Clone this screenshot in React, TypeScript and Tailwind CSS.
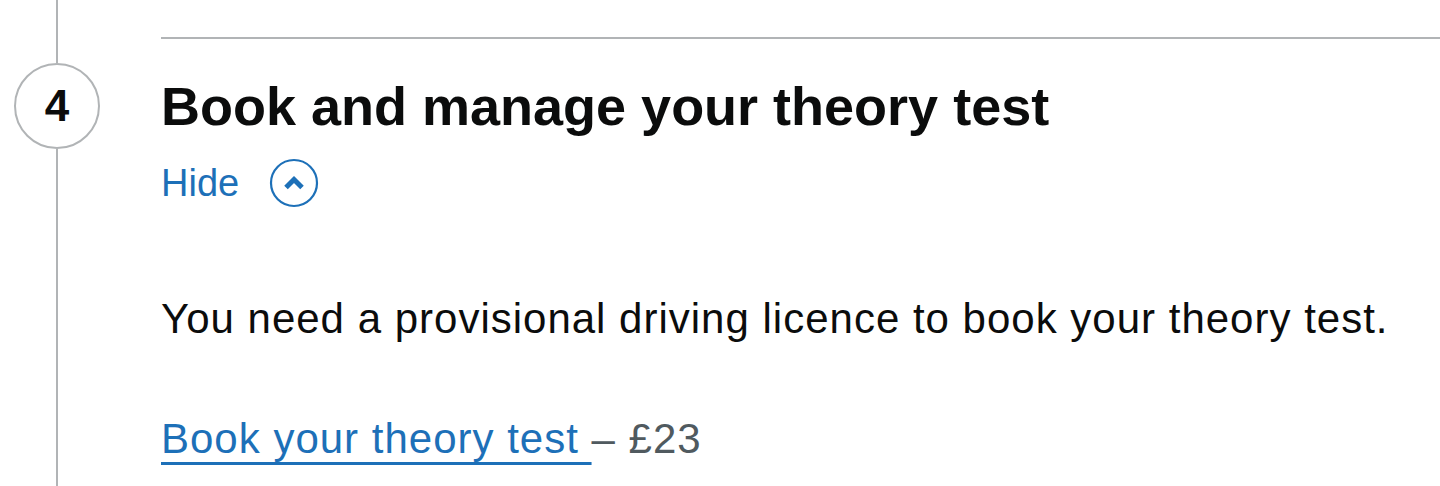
import React from 'react';

const ChevronCircle = () => (
    <svg width="50" height="50" viewBox="0 0 50 50" aria-hidden="true">
        <circle cx="25" cy="25" r="23" fill="none" stroke="#1d70b8" strokeWidth="2.2" />
        <path d="M17 29.5 L25 21.5 L33 29.5" fill="none" stroke="#1d70b8" strokeWidth="5" strokeLinejoin="miter" />
    </svg>
);

export default function App() {
    return (
        <div className="w-[1440px] h-[486px] bg-white overflow-hidden flex" style={{ fontFamily: '"Liberation Sans", Arial, sans-serif' }}>
            {/* Step marker column */}
            <div className="w-[114px] flex flex-col items-center shrink-0">
                <div className="w-[2px] h-[63px] bg-[#b1b4b6]" />
                <div className="w-[86px] h-[86px] rounded-full border-2 border-[#b1b4b6] flex items-center justify-center text-[44px] leading-none font-bold text-[#0b0c0c]">
                    4
                </div>
                <div className="w-[2px] flex-1 bg-[#b1b4b6]" />
            </div>

            {/* Step content */}
            <div className="flex-1 ml-[47px] mt-[37px] border-t-2 border-[#b1b4b6]">
                <h2 className="mt-[37px] text-[54px] leading-[60px] font-bold text-[#0b0c0c]">
                    Book and manage your theory test
                </h2>
                <div className="mt-[22px] flex items-center gap-[30px] text-[#1d70b8] text-[38px] leading-[40px]">
                    <span>Hide</span>
                    <ChevronCircle />
                </div>
                <p className="mt-[86px] text-[42px] leading-[50px] tracking-[1px] text-[#0b0c0c]">
                    You need a provisional driving licence to book your theory test.
                </p>
                <p className="mt-[70px] text-[42px] leading-[50px] tracking-[1px] text-[#505a5f]">
                    <a href="#" className="text-[#1d70b8] underline decoration-[3px] underline-offset-[9px]">Book your theory test </a>– £23
                </p>
            </div>
        </div>
    );
}
